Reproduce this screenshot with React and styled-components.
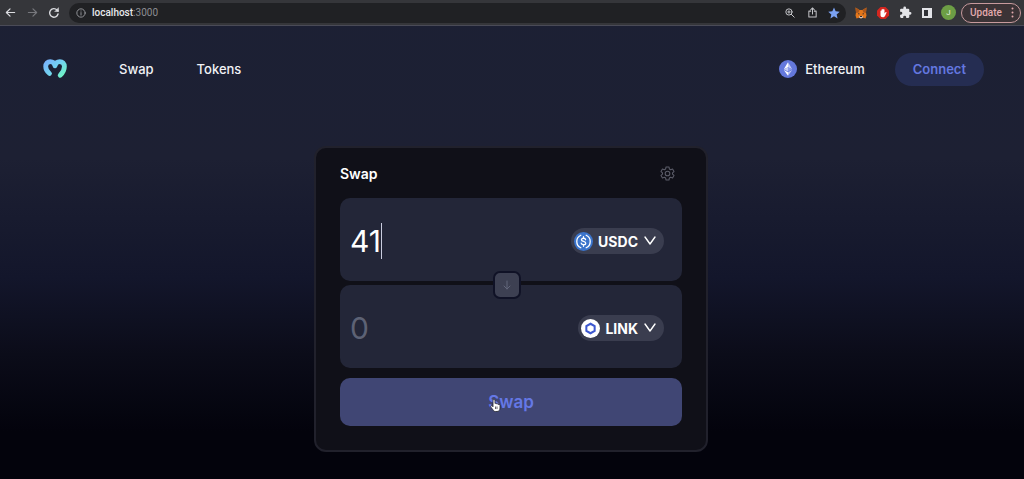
import React, { useState } from "react"
import styled, { createGlobalStyle } from "styled-components"

/*
 * Styles
 */

const GlobalStyle = createGlobalStyle`
  * {
    box-sizing: border-box;
  }

  body {
    background: #03030c;
    color: #fff;
    font-family: Inter, "Liberation Sans", sans-serif;
    margin: 0;
  }

  button,
  input {
    border: 0;
    color: inherit;
    font-family: inherit;
    margin: 0;
    padding: 0;
  }

  svg {
    display: block;
    flex: none;
  }
`

const Page = styled.div`
  background: linear-gradient(
    180deg,
    #1c2034 0%,
    #1d2033 33%,
    #13162b 58%,
    #0b0c19 74%,
    #03030c 90%
  );
  display: flex;
  flex-direction: column;
  min-height: 100vh;
`

const Toolbar = styled.div`
  align-items: center;
  background: #35363a;
  border-bottom: 1px solid #4a4b57;
  display: flex;
  font-family: Roboto, "Liberation Sans", sans-serif;
  height: 26px;
  padding: 0 3px 0 4px;
`

const ToolButton = styled.button`
  align-items: center;
  background: none;
  color: ${(props) => props.$color || "#dcdde1"};
  display: flex;
  height: 20px;
  justify-content: center;
  width: ${(props) => props.$width || 22}px;
`

const AddressBar = styled.div`
  align-items: center;
  background: #202124;
  border-radius: 10px;
  display: flex;
  flex: 1;
  height: 20px;
  margin: 0 4px 0 9px;
  min-width: 0;
  padding: 0 1px 0 7px;
`

const Url = styled.span`
  color: #8d8e93;
  flex: 1;
  font-size: 10px;
  line-height: 12px;
  margin-left: 6px;

  b {
    color: #e8e9ec;
    font-weight: 500;
  }
`

const Avatar = styled.button`
  background: #6d9e45;
  border-radius: 50%;
  color: #e9f1e2;
  font-size: 8px;
  height: 15px;
  line-height: 15px;
  margin: 0 5px 0 3px;
  width: 15px;
`

const Update = styled.button`
  align-items: center;
  background: #3b3336;
  border: 1px solid #c79a9d;
  border-radius: 10px;
  color: #e2a9ad;
  display: flex;
  font-size: 10px;
  font-weight: 500;
  height: 20px;
  justify-content: space-between;
  padding: 0 6px 0 8px;
  width: 60px;
`

const Header = styled.header`
  align-items: center;
  display: flex;
  height: 86px;
  justify-content: space-between;
  padding: 0 40px 0 42px;
`

const HeaderSide = styled.div`
  align-items: center;
  display: flex;
`

const Nav = styled.nav`
  display: flex;
  gap: 43px;
  margin-left: 51px;
`

const NavLink = styled.a`
  color: #f1f2f6;
  font-size: 13px;
  font-weight: 500;
  text-decoration: none;
`

const Chain = styled.div`
  align-items: center;
  color: #f1f2f6;
  display: flex;
  font-size: 13px;
  font-weight: 500;
  gap: 8px;
  margin-right: 30px;
`

const Connect = styled.button`
  background: #252d52;
  border-radius: 17px;
  color: #6478e0;
  font-size: 13px;
  font-weight: 600;
  height: 33px;
  padding: 0 18px;
`

const Main = styled.main`
  display: flex;
  justify-content: center;
  padding: 34px 2px 24px 0;
`

const Card = styled.section`
  background: #101018;
  border: 2px solid #21212c;
  border-radius: 12px;
  max-width: 394px;
  padding: 0 24px 24px;
  width: 100%;
`

const CardHeader = styled.div`
  align-items: center;
  display: flex;
  height: 50px;
  justify-content: space-between;
  padding-right: 7px;
`

const Title = styled.h1`
  font-size: 14px;
  font-weight: 600;
  margin: 0;
`

const IconButton = styled.button`
  background: none;
  color: #5b5c68;
`

const Fields = styled.div`
  display: grid;
  gap: 4px;
  position: relative;
`

const Field = styled.div`
  align-items: center;
  background: #232638;
  border-radius: 10px;
  display: flex;
  height: 83px;
  justify-content: space-between;
  padding: 3px 18px 0 10px;
`

const Amount = styled.div`
  align-items: center;
  display: flex;
`

const AmountInput = styled.input`
  background: none;
  caret-color: transparent;
  field-sizing: content;
  font-size: 30px;
  line-height: 36px;
  outline: none;

  &::placeholder {
    color: #5d6275;
    opacity: 1;
  }
`

const Caret = styled.span`
  background: #c9ccde;
  height: 36px;
  width: 1px;
`

const TokenButton = styled.button`
  align-items: center;
  background: #3a3d4f;
  border-radius: 13px;
  display: flex;
  font-size: 14px;
  font-weight: 700;
  gap: 5px;
  height: 26px;
  padding: 0 7px 0 3px;
`

const FlipButton = styled.button`
  align-items: center;
  background: #3d4052;
  border: 2px solid #101226;
  border-radius: 7px;
  color: #62667a;
  display: flex;
  height: 28px;
  justify-content: center;
  left: calc(50% - 18px);
  position: absolute;
  top: calc(50% - 12px);
  width: 28px;
`

const SwapButton = styled.button`
  background: #404674;
  border-radius: 10px;
  color: #6578e6;
  font-size: 17px;
  font-weight: 600;
  height: 48px;
  margin-top: 10px;
  position: relative;
  width: 100%;
`

const Pointer = styled.svg`
  left: 50%;
  margin-left: -21px;
  position: absolute;
  top: 21px;
`

/*
 * Icons
 */

const Stroke = ({ size, box = 24, width = 2, children, ...rest }) => (
  <svg
    width={size}
    height={size}
    viewBox={`0 0 ${box} ${box}`}
    fill="none"
    stroke="currentColor"
    strokeWidth={width}
    strokeLinecap="round"
    strokeLinejoin="round"
    aria-hidden="true"
    {...rest}
  >
    {children}
  </svg>
)

const ArrowIcon = ({ flip }) => (
  <Stroke size={11} width={2.6}>
    <path d={flip ? "M3 12h18M13 4l8 8-8 8" : "M21 12H3M11 4l-8 8 8 8"} />
  </Stroke>
)

const ReloadIcon = () => (
  <Stroke size={12} width={2.8}>
    <path d="M20 14a8.500 8.500 0 1 1-2-8l2 2" />
    <path d="M21 2v7h-7z" fill="currentColor" strokeWidth="1" />
  </Stroke>
)

const InfoIcon = () => (
  <Stroke size={10} color="#a5a6ab">
    <circle cx="12" cy="12" r="10" />
    <path d="M12 11v6M12 7v0.500" />
  </Stroke>
)

const ZoomIcon = () => (
  <Stroke size={10} width={2.4}>
    <circle cx="9.500" cy="9.500" r="7.500" />
    <path d="M15 15l7 7M6.500 9.500h6M9.500 6.500v6" />
  </Stroke>
)

const ShareIcon = () => (
  <Stroke size={11} width={2.2}>
    <path d="M8 9H4v13h16V9h-4M12 15V2M8 6l4-4 4 4" />
  </Stroke>
)

const StarIcon = () => (
  <svg width="12" height="12" viewBox="0 0 24 24" fill="currentColor" aria-hidden="true">
    <path d="M12 1l3.300 7.600 8.200.7-6.200 5.500 1.900 8.100L12 18.600 4.800 22.900l1.900-8.100L.5 9.300l8.200-.7z" />
  </svg>
)

const FoxIcon = () => (
  <svg width="12" height="12" viewBox="0 0 24 24" aria-hidden="true">
    <path d="M1 1l8 5h6l8-5-1 10 1 6-2 6-6-2-3 2-3-2-6 2-2-6 1-6z" fill="#e2761b" />
    <path d="M1 1l8 5-2 5-5 1zM23 1l-8 5 2 5 5 1z" fill="#a9561c" />
    <path d="M6 12l4 2-3 1zM18 12l-4 2 3 1z" fill="#2b2a33" />
    <path d="M9 18h6l1 3-4 2-4-2z" fill="#d9c5b4" />
    <path d="M10 18h4v2h-4z" fill="#2b2a33" />
  </svg>
)

const BlockerIcon = () => (
  <svg width="12" height="12" viewBox="0 0 24 24" aria-hidden="true">
    <path d="M7 0h10l7 7v10l-7 7H7l-7-7V7z" fill="#d3261f" />
    <path
      d="M7 12V8c0-1.500 2-1.500 2 0V5.500c0-1.500 2-1.500 2 0V4.500c0-1.500 2-1.500 2 0v1c0-1.500 2-1.500 2 0V13l2-2.500c1-1 2.500 0 2 1L16 18c-1 2-2.500 2.500-4.500 2.500-3 0-4.500-1.500-4.500-4.500z"
      fill="#fff"
    />
  </svg>
)

const PuzzleIcon = () => (
  <svg width="13" height="13" viewBox="0 0 24 24" fill="#e3e4e8" aria-hidden="true">
    <path d="M20.500 11H19V7a2 2 0 0 0-2-2h-4V3.500a2.500 2.500 0 0 0-5 0V5H4a2 2 0 0 0-2 2v3.800h1.500a2.700 2.700 0 0 1 0 5.400H2V20a2 2 0 0 0 2 2h3.800v-1.500a2.700 2.700 0 0 1 5.400 0V22H17a2 2 0 0 0 2-2v-4h1.500a2.500 2.500 0 0 0 0-5z" />
  </svg>
)

const PanelIcon = () => (
  <svg width="10" height="10" viewBox="0 0 10 10" aria-hidden="true">
    <path d="M0 0h10v10H0z" fill="#e3e4e8" />
    <path d="M2 2h4v6H2z" fill="#303136" />
  </svg>
)

const DotsIcon = () => (
  <svg width="3" height="11" viewBox="0 0 3 11" fill="currentColor" aria-hidden="true">
    <circle cx="1.500" cy="1.500" r="1" />
    <circle cx="1.500" cy="5.500" r="1" />
    <circle cx="1.500" cy="9.500" r="1" />
  </svg>
)

const Logo = () => (
  <svg width="26" height="22" viewBox="0 0 26 22" fill="none" role="img" aria-label="Moralis">
    <defs>
      <linearGradient id="logo" x1="5" y1="3" x2="20" y2="19" gradientUnits="userSpaceOnUse">
        <stop stopColor="#78b4fb" />
        <stop offset="0.500" stopColor="#72d3f0" />
        <stop offset="1" stopColor="#6ff3c4" />
      </linearGradient>
    </defs>
    <path
      d="M7.500 15.500C5 13.500 3.700 11.300 3.700 8.500 3.700 5.500 5.600 3.600 8.200 3.600c2.600 0 4.300 1.600 4.800 4.200.5-2.600 2.200-4.200 4.800-4.200 2.700 0 4.600 1.900 4.600 4.900 0 3.400-1.600 6.300-4.200 8.800"
      stroke="url(#logo)"
      strokeWidth="4.800"
      strokeLinecap="round"
      strokeLinejoin="round"
    />
  </svg>
)

const EthereumIcon = () => (
  <svg width="18" height="18" viewBox="0 0 32 32" aria-hidden="true">
    <circle cx="16" cy="16" r="16" fill="#6478dc" />
    <path d="M16 4v9l7.500 3.300z" fill="#c3cbf5" />
    <path d="M16 4L8.500 16.300 16 13z" fill="#fff" />
    <path d="M16 21.900V28l7.500-10.400z" fill="#c3cbf5" />
    <path d="M16 28v-6.100l-7.500-4.300z" fill="#fff" />
    <path d="M16 20.500l7.500-4.200L16 13z" fill="#8d9beb" />
    <path d="M8.500 16.300l7.500 4.200V13z" fill="#c3cbf5" />
  </svg>
)

const GearIcon = () => (
  <Stroke size={15} width={1.7}>
    <path d="M9.700 1.500h4.600l.7 3.200 2 1.200 3.100-1 2.300 4-2.400 2.200v1.800l2.400 2.200-2.300 4-3.100-1-2 1.200-.7 3.200H9.700L9 19.300l-2-1.200-3.100 1-2.300-4L4 12.900v-1.800L1.600 8.900l2.300-4 3.100 1 2-1.200z" />
    <circle cx="12" cy="12" r="3.700" />
  </Stroke>
)

const UsdcIcon = () => (
  <svg width="19" height="19" viewBox="0 0 32 32" fill="none" stroke="#fff" strokeWidth="2.200" strokeLinecap="round" aria-hidden="true">
    <circle cx="16" cy="16" r="16" fill="#3b74cb" stroke="none" />
    <path d="M11.500 5.500a11.500 11.500 0 0 0 0 21M20.500 5.500a11.500 11.500 0 0 1 0 21" />
    <path d="M19.500 13c-.3-1.600-1.600-2.500-3.500-2.500-2.200 0-3.500 1-3.500 2.600 0 3.900 7.200 1.800 7.200 5.800 0 1.700-1.500 2.600-3.700 2.600s-3.600-1-3.900-2.700M16 8v2.500M16 21.700V24" />
  </svg>
)

const LinkIcon = () => (
  <svg width="19" height="19" viewBox="0 0 32 32" aria-hidden="true">
    <circle cx="16" cy="16" r="16" fill="#fff" />
    <path d="M16 8l7 4v8l-7 4-7-4v-8z" fill="none" stroke="#3d58cf" strokeWidth="3.400" />
  </svg>
)

const ChevronIcon = () => (
  <Stroke size={14} box={14} width={1.4}>
    <path d="M2 3l5 7 5-7" />
  </Stroke>
)

const DownIcon = () => (
  <Stroke size={10} box={10} width={1}>
    <path d="M5 1v8M2 6l3 3 3-3" />
  </Stroke>
)

const HandPointer = () => (
  <Pointer width="11" height="13" viewBox="0 0 22 26" aria-hidden="true">
    <path
      d="M6 3c0-2.500 4-2.500 4 0v6c1.500-1 3.200-.5 3.500 1 1.300-.7 3-.2 3.200 1 1.800-.6 3.300.3 3.300 2v5c0 4-2 7-6 7h-3c-3 0-4-1.500-5.500-4L1.500 16C.5 14 3 12.500 4.500 14L6 15.500z"
      fill="#fff"
      stroke="#22232b"
      strokeWidth="1.600"
    />
    <path d="M11 15v5M14 15v5" stroke="#22232b" strokeWidth="1.400" />
  </Pointer>
)

/*
 * Components
 */

const BrowserBar = () => (
  <Toolbar>
    <ToolButton aria-label="Back" $width={12}>
      <ArrowIcon />
    </ToolButton>
    <ToolButton aria-label="Forward" $width={32} $color="#77787d">
      <ArrowIcon flip />
    </ToolButton>
    <ToolButton aria-label="Reload" $width={12}>
      <ReloadIcon />
    </ToolButton>
    <AddressBar>
      <InfoIcon />
      <Url>
        <b>localhost</b>:3000
      </Url>
      <ToolButton aria-label="Zoom" $color="#c3c4c8">
        <ZoomIcon />
      </ToolButton>
      <ToolButton aria-label="Share" $color="#c3c4c8">
        <ShareIcon />
      </ToolButton>
      <ToolButton aria-label="Bookmark" $color="#7ba2f3">
        <StarIcon />
      </ToolButton>
    </AddressBar>
    <ToolButton aria-label="Wallet">
      <FoxIcon />
    </ToolButton>
    <ToolButton aria-label="Blocker">
      <BlockerIcon />
    </ToolButton>
    <ToolButton aria-label="Extensions">
      <PuzzleIcon />
    </ToolButton>
    <ToolButton aria-label="Side panel">
      <PanelIcon />
    </ToolButton>
    <Avatar>J</Avatar>
    <Update>
      Update
      <DotsIcon />
    </Update>
  </Toolbar>
)

const TokenField = ({ label, value, onChange, icon, symbol }) => (
  <Field>
    <Amount>
      <AmountInput
        aria-label={label}
        placeholder="0"
        value={value}
        onChange={(e) => onChange(e.target.value)}
      />
      {value && <Caret />}
    </Amount>
    <TokenButton>
      {icon}
      {symbol}
      <ChevronIcon />
    </TokenButton>
  </Field>
)

const App = () => {
  const [sell, setSell] = useState("41")
  const [buy, setBuy] = useState("")

  return (
    <>
      <GlobalStyle />
      <Page>
        <BrowserBar />
        <Header>
          <HeaderSide>
            <Logo />
            <Nav>
              <NavLink href="#swap">Swap</NavLink>
              <NavLink href="#tokens">Tokens</NavLink>
            </Nav>
          </HeaderSide>
          <HeaderSide>
            <Chain>
              <EthereumIcon />
              Ethereum
            </Chain>
            <Connect>Connect</Connect>
          </HeaderSide>
        </Header>
        <Main>
          <Card>
            <CardHeader>
              <Title>Swap</Title>
              <IconButton aria-label="Settings">
                <GearIcon />
              </IconButton>
            </CardHeader>
            <Fields>
              <TokenField
                label="Sell amount"
                value={sell}
                onChange={setSell}
                icon={<UsdcIcon />}
                symbol="USDC"
              />
              <TokenField
                label="Buy amount"
                value={buy}
                onChange={setBuy}
                icon={<LinkIcon />}
                symbol="LINK"
              />
              <FlipButton aria-label="Switch tokens">
                <DownIcon />
              </FlipButton>
            </Fields>
            <SwapButton>
              Swap
              <HandPointer />
            </SwapButton>
          </Card>
        </Main>
      </Page>
    </>
  )
}

export default App
